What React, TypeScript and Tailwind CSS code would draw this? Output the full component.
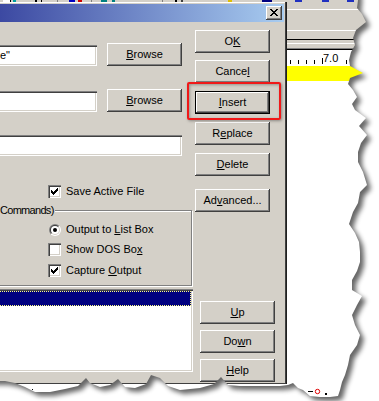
import React from "react";

const BTN =
  "flex items-center justify-center w-[75px] h-[23px] shrink-0 bg-[#d4d0c8] text-black shadow-[inset_-1px_-1px_#404040,inset_1px_1px_#ffffff,inset_-2px_-2px_#808080]";
const BTN_DEFAULT =
  "flex items-center justify-center w-[75px] h-[23px] shrink-0 bg-[#d4d0c8] text-black shadow-[inset_0_0_0_1px_#000000,inset_-2px_-2px_#404040,inset_2px_2px_#ffffff,inset_-3px_-3px_#808080]";
const SUNKEN =
  "bg-white shadow-[inset_1px_1px_#808080,inset_2px_2px_#404040,inset_-1px_-1px_#ffffff,inset_-2px_-2px_#d4d0c8]";

const CHECK_PX: [number, number, number][] = [
  [9, 3, 1],
  [8, 4, 2],
  [3, 5, 1],
  [7, 5, 3],
  [3, 6, 2],
  [6, 6, 3],
  [3, 7, 5],
  [4, 8, 3],
  [5, 9, 1],
];

function CheckBox({ checked }: { checked: boolean }) {
  return (
    <div className={"w-[13px] h-[13px] shrink-0 " + SUNKEN}>
      <svg width="13" height="13" viewBox="0 0 13 13" shapeRendering="crispEdges" className="block">
        {checked &&
          CHECK_PX.map(([x, y, w], i) => <rect key={i} x={x} y={y} width={w} height={1} fill="#000" />)}
      </svg>
    </div>
  );
}

function Radio() {
  return (
    <div className="w-[13px] h-[13px] shrink-0 flex items-center justify-center">
      <svg width="12" height="12" viewBox="0 0 12 12" className="block">
        <defs>
          <linearGradient id="rOuter" x1="0" y1="0" x2="1" y2="1">
            <stop offset="0.5" stopColor="#808080" />
            <stop offset="0.5" stopColor="#ffffff" />
          </linearGradient>
          <linearGradient id="rInner" x1="0" y1="0" x2="1" y2="1">
            <stop offset="0.5" stopColor="#404040" />
            <stop offset="0.5" stopColor="#d4d0c8" />
          </linearGradient>
        </defs>
        <circle cx="6" cy="6" r="6" fill="url(#rOuter)" />
        <circle cx="6" cy="6" r="5" fill="url(#rInner)" />
        <circle cx="6" cy="6" r="4" fill="#ffffff" />
        <circle cx="6" cy="6" r="2" fill="#000000" />
      </svg>
    </div>
  );
}

const X_PX: [number, number, number][] = [
  [0, 0, 2],
  [6, 0, 2],
  [1, 1, 2],
  [5, 1, 2],
  [2, 2, 4],
  [3, 3, 2],
  [2, 4, 4],
  [1, 5, 2],
  [5, 5, 2],
  [0, 6, 2],
  [6, 6, 2],
];

function TitleBar() {
  return (
    <div className="h-[18px] shrink-0 flex items-center justify-end pr-[2px] bg-[linear-gradient(to_right,#3c49a2,#a8ccf0)]">
      <div className="w-[16px] h-[14px] flex items-center justify-center bg-[#d4d0c8] shadow-[inset_-1px_-1px_#404040,inset_1px_1px_#ffffff,inset_-2px_-2px_#808080]">
        <svg width="8" height="7" viewBox="0 0 8 7" shapeRendering="crispEdges" className="block -mt-[1px]">
          {X_PX.map(([x, y, w], i) => (
            <rect key={i} x={x} y={y} width={w} height={1} fill="#000" />
          ))}
        </svg>
      </div>
    </div>
  );
}

function LeftColumn() {
  return (
    <div className="w-[193px] shrink-0 flex flex-col">
      {/* row 1 */}
      <div className="mt-[21px] flex items-start">
        <div className={"-ml-[10px] mt-[2px] w-[107px] h-[21px] flex items-center pl-[10px] " + SUNKEN}>
          <span>e"</span>
        </div>
        <div className={"ml-[10px] " + BTN}>
          <span>
            <u className="underline-offset-[1px]">B</u>rowse
          </span>
        </div>
      </div>
      {/* row 2 */}
      <div className="mt-[23px] flex items-start">
        <div className={"-ml-[10px] mt-[2px] w-[107px] h-[21px] " + SUNKEN} />
        <div className={"ml-[10px] " + BTN}>
          <span>
            <u className="underline-offset-[1px]">B</u>rowse
          </span>
        </div>
      </div>
      {/* field 3 */}
      <div className={"mt-[23px] -ml-[10px] w-[192px] h-[21px] " + SUNKEN} />
      {/* save active file */}
      <div className="mt-[29px] h-[13px] flex items-center gap-[5px] pl-[48px]">
        <CheckBox checked />
        <span>Save Active File</span>
      </div>
      {/* group box */}
      <div className="mt-[12px] -ml-[10px] w-[202px] flex flex-col pb-[8px] border border-[#808080] shadow-[1px_1px_0_#ffffff,inset_1px_1px_0_#ffffff]">
        <div className="-mt-[7px] ml-[9px] self-start h-[13px] pr-[1px] whitespace-nowrap bg-[#d4d0c8] tracking-[-0.7px]">
          <span>Commands)</span>
        </div>
        <div className="mt-[6px] h-[13px] flex items-center gap-[5px] pl-[57px]">
          <Radio />
          <span>
            Output to <u className="underline-offset-[1px]">L</u>ist Box
          </span>
        </div>
        <div className="mt-[7px] h-[13px] flex items-center gap-[5px] pl-[57px]">
          <CheckBox checked={false} />
          <span>
            Show DOS Bo<u className="underline-offset-[1px]">x</u>
          </span>
        </div>
        <div className="mt-[8px] h-[13px] flex items-center gap-[5px] pl-[57px]">
          <CheckBox checked />
          <span>
            Capture <u className="underline-offset-[1px]">O</u>utput
          </span>
        </div>
      </div>
      {/* list box */}
      <div className={"mt-[3px] -ml-[10px] w-[203px] h-[83px] pt-[2px] pr-[2px] " + SUNKEN}>
        <div className="h-[15px] bg-[#000080] border border-dotted border-[#ffff80]" />
      </div>
    </div>
  );
}

function RightColumn() {
  return (
    <div className="ml-[2px] flex flex-col">
      <div className={"mt-[8px] " + BTN}>
        <span>
          O<u className="underline-offset-[1px]">K</u>
        </span>
      </div>
      <div className={"mt-[7px] " + BTN}>
        <span>
          Cance<u className="underline-offset-[1px]">l</u>
        </span>
      </div>
      <div className={"mt-[8px] " + BTN_DEFAULT}>
        <span>
          <u className="underline-offset-[1px]">I</u>nsert
        </span>
      </div>
      <div className={"mt-[8px] " + BTN}>
        <span>
          R<u className="underline-offset-[1px]">e</u>place
        </span>
      </div>
      <div className={"mt-[8px] " + BTN}>
        <span>
          <u className="underline-offset-[1px]">D</u>elete
        </span>
      </div>
      <div className={"mt-[13px] " + BTN}>
        <span>
          Ad<u className="underline-offset-[1px]">v</u>anced...
        </span>
      </div>
      <div className={"mt-[89px] ml-[5px] " + BTN}>
        <span>
          <u className="underline-offset-[1px]">U</u>p
        </span>
      </div>
      <div className={"mt-[6px] ml-[5px] " + BTN}>
        <span>
          Do<u className="underline-offset-[1px]">w</u>n
        </span>
      </div>
      <div className={"mt-[6px] ml-[5px] " + BTN}>
        <span>
          <u className="underline-offset-[1px]">H</u>elp
        </span>
      </div>
    </div>
  );
}

function Dialog() {
  return (
    <div className="w-[287px] h-[382px] shrink-0 flex flex-col bg-[#d4d0c8] pt-[2px] pr-[3px] shadow-[inset_-1px_0_#202020,inset_-2px_0_#404040,inset_0_-1px_#404040,inset_0_1px_#ffffff]">
      <TitleBar />
      <div className="flex flex-1">
        <LeftColumn />
        <RightColumn />
      </div>
    </div>
  );
}

function AppArea() {
  const ticks = [3, 11, 19, 27, 59, 67, 75, 83];
  return (
    <div className="flex-1 flex flex-col bg-white">
      <div className="h-[7px] bg-[#d4d0c8]" />
      <div className="h-px bg-white" />
      <div className="h-[20px] bg-[#d4d0c8]" />
      <div className="h-px bg-white" />
      <div className="h-[8px] bg-[#d4d0c8]" />
      <div className="h-px bg-black" />
      <div className="h-[3px] bg-[#d4d0c8]" />
      <div className="h-px bg-white" />
      <div className="h-[4px] bg-[#d4d0c8]" />
      <div className="h-px bg-[#808080]" />
      <div className="h-px bg-black" />
      <div className="relative h-[16px] bg-white">
        <svg width="92" height="16" className="absolute left-0 top-0" shapeRendering="crispEdges">
          {ticks.map((x) => (
            <rect key={x} x={x} y={10} width={1} height={4} fill="#000" />
          ))}
          <rect x={35} y={8} width={1} height={6} fill="#000" />
        </svg>
        <div className="relative pl-[36px] pt-[2px] leading-[13px]">7.0</div>
      </div>
      <div className="h-[15px] bg-[#ffff00]" />
    </div>
  );
}

function TopStrip() {
  const marks: [number, number, string][] = [
    [3, 7, "#ffffff"],
    [10, 1, "#000000"],
    [13, 3, "#00a0a0"],
    [35, 2, "#000000"],
    [41, 1, "#000000"],
    [57, 1, "#808080"],
    [69, 6, "#0000c0"],
    [78, 4, "#d00000"],
    [91, 1, "#808080"],
    [101, 6, "#008080"],
    [112, 3, "#008080"],
    [162, 1, "#808080"],
    [175, 2, "#000000"],
    [181, 2, "#404040"],
    [228, 4, "#e0c000"],
    [262, 10, "#000080"],
    [295, 7, "#2030c0"],
    [322, 7, "#2030c0"],
    [347, 7, "#2030c0"],
  ];
  return (
    <div className="h-[2px] bg-[#d4d0c8]">
      <svg width="379" height="2" className="block" shapeRendering="crispEdges">
        {marks.map(([x, w, c], i) => (
          <rect key={i} x={x} y={0} width={w} height={2} fill={c} />
        ))}
      </svg>
    </div>
  );
}

function BottomStrip() {
  return (
    <div className="h-[17px] bg-white">
      <svg width="379" height="17" className="block">
        <rect x={32} y={5} width={1} height={1} fill="#000" />
        <rect x={308} y={7} width={5} height={1} fill="#000" />
        <circle cx={317.5} cy={7.5} r={2.2} fill="none" stroke="#e00000" strokeWidth={1} />
        <rect x={325} y={9} width={2} height={2} fill="#000" />
      </svg>
    </div>
  );
}

const EDGE: [number, number][] = [
  [358, -10], [358, 0], [357, 8], [362, 14], [366, 22], [356, 30], [353, 38], [355, 45], [351, 52],
  [349, 60], [350, 66], [363, 73], [350, 78], [348, 84], [353, 90], [357, 97], [352, 104], [355, 110],
  [366, 118], [359, 126], [367, 135], [361, 143], [358, 152], [358, 162], [363, 172], [367, 185],
  [360, 192], [358, 203], [353, 212], [349, 224], [355, 233], [359, 242], [360, 252], [360, 262],
  [357, 271], [352, 280], [352, 290], [362, 296], [357, 305], [352, 315], [355, 325], [360, 335],
  [357, 345], [350, 355], [348, 365], [345, 375], [342, 382], [340, 390], [338, 396],
  [330, 397], [320, 397], [310, 396], [303, 390], [298, 388], [293, 383], [288, 385], [280, 386],
  [255, 386], [240, 386], [228, 385], [221, 377], [214, 384], [200, 388], [180, 390], [168, 386],
  [160, 378], [151, 375], [146, 384], [135, 388], [125, 387], [118, 379], [110, 385], [100, 387],
  [90, 383], [86, 378], [78, 386], [65, 389], [50, 392], [35, 392], [25, 387], [15, 383], [5, 381],
  [-10, 381], [-10, -10],
];

function TornEdge() {
  const pts = EDGE.map(([x, y]) => `${x},${y}`).join(" ");
  return (
    <svg width="379" height="401" className="absolute left-0 top-0 pointer-events-none">
      <defs>
        <mask id="outsideMask" maskUnits="userSpaceOnUse" x="0" y="0" width="379" height="401">
          <rect x="0" y="0" width="379" height="401" fill="white" />
          <polygon points={pts} fill="black" />
        </mask>
        <filter id="tornBlur" x="-20%" y="-20%" width="140%" height="140%">
          <feGaussianBlur stdDeviation="2.5" />
        </filter>
      </defs>
      <g mask="url(#outsideMask)">
        <rect x="0" y="0" width="379" height="401" fill="white" />
        <polygon points={pts} transform="translate(4,4)" fill="#000" opacity="0.6" filter="url(#tornBlur)" />
      </g>
    </svg>
  );
}

function RedBox() {
  return (
    <div className="absolute left-[187px] top-[82px] w-[94px] h-[38px] border-2 border-[#f01818] rounded-[2px] shadow-[1px_1px_3px_rgba(0,0,0,0.35),inset_1px_1px_3px_rgba(0,0,0,0.3)]" />
  );
}

export default function App() {
  return (
    <div className="relative w-[379px] h-[401px] overflow-hidden bg-white font-['Liberation_Sans',Arial,sans-serif] text-[11px] leading-[13px] text-black">
      <TopStrip />
      <div className="flex">
        <Dialog />
        <AppArea />
      </div>
      <BottomStrip />
      <RedBox />
      <TornEdge />
    </div>
  );
}
